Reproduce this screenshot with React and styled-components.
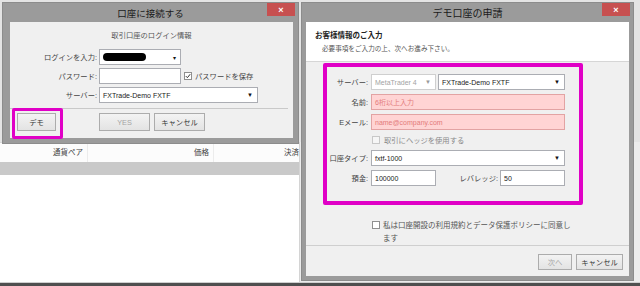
import React from "react";
import styled, { createGlobalStyle } from "styled-components";

const GlobalStyle = createGlobalStyle`
  html, body {
    margin: 0;
    padding: 0;
  }
  body {
    width: 640px;
    height: 286px;
    overflow: hidden;
    font-family: "Liberation Sans", "Noto Sans CJK JP", sans-serif;
    font-size: 7.5px;
    color: #333;
  }
  * {
    box-sizing: border-box;
  }
`;

const Desktop = styled.div`
  position: relative;
  width: 640px;
  height: 286px;
  background: #e4e4e4;
  display: flex;
  flex-direction: column;
  padding-top: 142px;
  overflow: hidden;
`;

const AppArea = styled.div`
  flex: 1;
  display: flex;
  background: #ececec;
`;

const Table = styled.div`
  width: 300px;
  display: flex;
  flex-direction: column;
  background: #fff;
  border-right: 1px solid #d4d4d4;
  overflow: hidden;
`;

const TableHead = styled.div`
  height: 20px;
  display: flex;
  background: #fcfcfc;
  border-top: 1px solid #d8d8d8;
`;

const HeadCell = styled.div`
  flex: 0 0 ${(p) => p.$w}px;
  line-height: 19px;
  text-align: ${(p) => (p.$left ? "left" : "right")};
  padding: ${(p) => (p.$left ? "0 0 0 70px" : "0 4px 0 0")};
  border-right: 1px solid #ececec;
  color: #444;
  white-space: nowrap;
`;

const Band = styled.div`
  height: 13px;
  background: #c9c9c9;
`;

const TableBody = styled.div`
  flex: 1;
  background: #fff;
`;

const BottomBar = styled.div`
  height: 4px;
  border-top: 1px solid #cfcfcf;
  background: #4f4f4f;
`;

const Window = styled.div`
  position: absolute;
  left: ${(p) => p.$x}px;
  top: ${(p) => p.$y}px;
  width: ${(p) => p.$w}px;
  background: #9b9b9b;
  display: flex;
  flex-direction: column;
  box-shadow: 0 0 0 1px #8c8c8c;
`;

const TitleBar = styled.div`
  height: 19px;
  display: grid;
  grid-template-columns: 1fr auto 1fr;
`;

const Title = styled.div`
  grid-column: 2;
  align-self: center;
  font-size: ${(p) => p.$size}px;
  color: #1a1a1a;
  white-space: nowrap;
`;

const CloseButton = styled.div`
  grid-column: 3;
  justify-self: end;
  align-self: start;
  width: 28px;
  height: 13px;
  margin-right: 3px;
  background: #c75050;
  color: #fff;
  font-size: 9px;
  font-weight: bold;
  display: flex;
  align-items: center;
  justify-content: center;
`;

const Frame = styled.div`
  padding: ${(p) => p.$pad};
`;

const Body = styled.div`
  background: #f0f0f0;
  height: ${(p) => p.$h}px;
  display: flex;
  flex-direction: column;
`;

const Caption = styled.div`
  padding-top: 8px;
  line-height: 12px;
  text-align: center;
  font-size: 7.3px;
  color: #555;
`;

const FormGrid = styled.div`
  display: grid;
  grid-template-columns: ${(p) => p.$cols};
  column-gap: ${(p) => p.$colGap}px;
  row-gap: ${(p) => p.$rowGap}px;
  align-items: center;
  margin-top: ${(p) => p.$mt || 0}px;
`;

const Label = styled.div`
  text-align: right;
  white-space: nowrap;
  color: #444;
  font-size: 7.3px;
  flex: ${(p) => (p.$grow ? 1 : "none")};
`;

const FieldRow = styled.div`
  display: flex;
  align-items: center;
  gap: ${(p) => p.$gap || 0}px;
  height: ${(p) => (p.$h ? `${p.$h}px` : "auto")};
  padding-left: ${(p) => p.$pl || 0}px;
`;

const Input = styled.div`
  width: ${(p) => (p.$w ? `${p.$w}px` : "auto")};
  flex: ${(p) => (p.$w ? "0 0 auto" : "1")};
  height: 16px;
  border: 1px solid ${(p) => (p.$error ? "#e2a3a3" : p.$muted ? "#cfcfcf" : "#abadb3")};
  background: ${(p) => (p.$error ? "#ffd4d4" : "#fff")};
  color: ${(p) => (p.$error ? "#e37b7b" : p.$muted ? "#a3a3a3" : "#222")};
  display: flex;
  align-items: center;
  padding: 0 4px 0 3px;
  font-size: 7px;
  white-space: nowrap;
  overflow: hidden;
`;

const InputText = styled.span`
  flex: 1;
  display: flex;
  align-items: center;
`;

const Arrow = styled.span`
  font-size: ${(p) => p.$size || 6}px;
  color: ${(p) => (p.$muted ? "#999" : "#111")};
`;

const Redacted = styled.span`
  width: 43px;
  height: 8px;
  border-radius: 4px;
  background: #000;
`;

const Check = styled.span`
  width: 8px;
  height: 8px;
  flex: 0 0 8px;
  margin-top: ${(p) => p.$mt || 0}px;
  border: 1px solid ${(p) => (p.$disabled ? "#c8c8c8" : "#8f8f8f")};
  background: ${(p) => (p.$disabled ? "#f6f6f6" : "#fff")};
  display: inline-flex;
  align-items: center;
  justify-content: center;
`;

const CheckLabel = styled.span`
  color: ${(p) => (p.$disabled ? "#8a8a8a" : "#444")};
  font-size: 7.3px;
  white-space: nowrap;
`;

const Separator = styled.div`
  height: 1px;
  background: #c9c9c9;
  margin: ${(p) => p.$m};
`;

const ButtonRow = styled.div`
  display: flex;
  align-items: center;
  gap: 4px;
  padding: ${(p) => p.$pad};
  justify-content: ${(p) => p.$justify || "flex-start"};
`;

const Button = styled.div`
  width: ${(p) => p.$w}px;
  height: ${(p) => p.$h || 18}px;
  border: 1px solid #acacac;
  background: linear-gradient(#f3f3f3, #e3e3e3);
  color: ${(p) => (p.$disabled ? "#a4a4a4" : "#333")};
  font-size: 7.3px;
  display: flex;
  align-items: center;
  justify-content: center;
  margin-left: ${(p) => p.$ml || 0}px;
`;

const Highlight = styled.div`
  position: relative;
  &::after {
    content: "";
    position: absolute;
    top: -5px;
    left: -5px;
    right: -7px;
    bottom: -8px;
    border: 3px solid #e000c6;
    border-radius: 2px;
  }
`;

const HeaderPanel = styled.div`
  height: 40px;
  background: #fff;
  border-bottom: 1px solid #d6d6d6;
  padding: 9px 0 0 9px;
`;

const HeaderTitle = styled.div`
  font-weight: bold;
  font-size: 7.5px;
  line-height: 10px;
  color: #222;
`;

const HeaderNote = styled.div`
  margin-top: 3px;
  padding-left: 7px;
  font-size: 6.6px;
  line-height: 10px;
  color: #555;
`;

const MarkBox = styled.div`
  width: 260px;
  margin: 1px 0 0 17px;
  border: 4px solid #e000c6;
  border-radius: 2px;
  padding: 7px 14px 15px 2px;
`;

const Agreement = styled.div`
  height: 40px;
  padding: 14px 0 0 66px;
  display: flex;
  gap: 3px;
  align-items: flex-start;
`;

const AgreementText = styled.div`
  width: 192px;
  font-size: 7.5px;
  line-height: 13px;
  color: #555;
`;

const Footer = styled.div`
  border-top: 1px solid #cfcfcf;
`;

const CheckMark = () => (
  <svg width="6" height="6" viewBox="0 0 6 6">
    <path d="M0.8 3.1 L2.4 4.7 L5.2 1.2" fill="none" stroke="#333" strokeWidth="1" />
  </svg>
);

function LoginDialog() {
  return (
    <Window $x={3} $y={3} $w={295}>
      <TitleBar>
        <Title $size={9.5}>口座に接続する</Title>
        <CloseButton>×</CloseButton>
      </TitleBar>
      <Frame $pad="0 5px 5px 7px">
        <Body $h={116}>
          <Caption>取引口座のログイン情報</Caption>
          <FormGrid $cols="87px 1fr" $colGap={2} $rowGap={3} $mt={7}>
            <Label>ログインを入力:</Label>
            <FieldRow>
              <Input $w={82}>
                <InputText>
                  <Redacted />
                </InputText>
                <Arrow $size={6}>▾</Arrow>
              </Input>
            </FieldRow>
            <Label>パスワード:</Label>
            <FieldRow $gap={3}>
              <Input $w={82} />
              <Check>
                <CheckMark />
              </Check>
              <CheckLabel>パスワードを保存</CheckLabel>
            </FieldRow>
            <Label>サーバー:</Label>
            <FieldRow>
              <Input $w={159}>
                <InputText>FXTrade-Demo FXTF</InputText>
                <Arrow>▼</Arrow>
              </Input>
            </FieldRow>
          </FormGrid>
          <Separator $m="5px 5px 0 0" />
          <ButtonRow $pad="4px 0 0 7px">
            <Highlight>
              <Button $w={39}>デモ</Button>
            </Highlight>
            <Button $w={51} $ml={39} $disabled>
              YES
            </Button>
            <Button $w={51}>キャンセル</Button>
          </ButtonRow>
        </Body>
      </Frame>
    </Window>
  );
}

function DemoDialog() {
  return (
    <Window $x={302} $y={3} $w={331}>
      <TitleBar>
        <Title $size={10}>デモ口座の申請</Title>
        <CloseButton>×</CloseButton>
      </TitleBar>
      <Frame $pad="0 4px 4px 4px">
        <Body $h={254}>
          <HeaderPanel>
            <HeaderTitle>お客様情報のご入力</HeaderTitle>
            <HeaderNote>必要事項をご入力の上、次へお進み下さい。</HeaderNote>
          </HeaderPanel>
          <MarkBox>
            <FormGrid $cols="39px 194px" $colGap={3} $rowGap={4}>
              <Label>サーバー:</Label>
              <FieldRow $gap={2}>
                <Input $w={65} $muted>
                  <InputText>MetaTrader 4</InputText>
                  <Arrow $muted>▼</Arrow>
                </Input>
                <Input>
                  <InputText>FXTrade-Demo FXTF</InputText>
                  <Arrow>▼</Arrow>
                </Input>
              </FieldRow>
              <Label>名前:</Label>
              <Input $error>6桁以上入力</Input>
              <Label>Eメール:</Label>
              <Input $error>name@company.com</Input>
              <span />
              <FieldRow $gap={4} $h={12} $pl={1}>
                <Check $disabled />
                <CheckLabel $disabled>取引にヘッジを使用する</CheckLabel>
              </FieldRow>
              <Label>口座タイプ:</Label>
              <Input>
                <InputText>fxtf-1000</InputText>
                <Arrow>▼</Arrow>
              </Input>
              <Label>預金:</Label>
              <FieldRow $gap={2}>
                <Input $w={65}>100000</Input>
                <Label $grow>レバレッジ:</Label>
                <Input $w={65}>50</Input>
              </FieldRow>
            </FormGrid>
          </MarkBox>
          <Agreement>
            <Check $mt={2} />
            <AgreementText>私は口座開設の利用規約とデータ保護ポリシーに同意します</AgreementText>
          </Agreement>
          <Footer>
            <ButtonRow $pad="8px 6px 6px 0" $justify="flex-end">
              <Button $w={34} $h={16} $disabled>
                次へ
              </Button>
              <Button $w={47} $h={16}>
                キャンセル
              </Button>
            </ButtonRow>
          </Footer>
        </Body>
      </Frame>
    </Window>
  );
}

export default function App() {
  return (
    <>
      <GlobalStyle />
      <Desktop>
        <AppArea>
          <Table>
            <TableHead>
              <HeadCell $w={88}>通貨ペア</HeadCell>
              <HeadCell $w={126}>価格</HeadCell>
              <HeadCell $w={86} $left>
                決済
              </HeadCell>
            </TableHead>
            <Band />
            <TableBody />
          </Table>
        </AppArea>
        <BottomBar />
        <LoginDialog />
        <DemoDialog />
      </Desktop>
    </>
  );
}
